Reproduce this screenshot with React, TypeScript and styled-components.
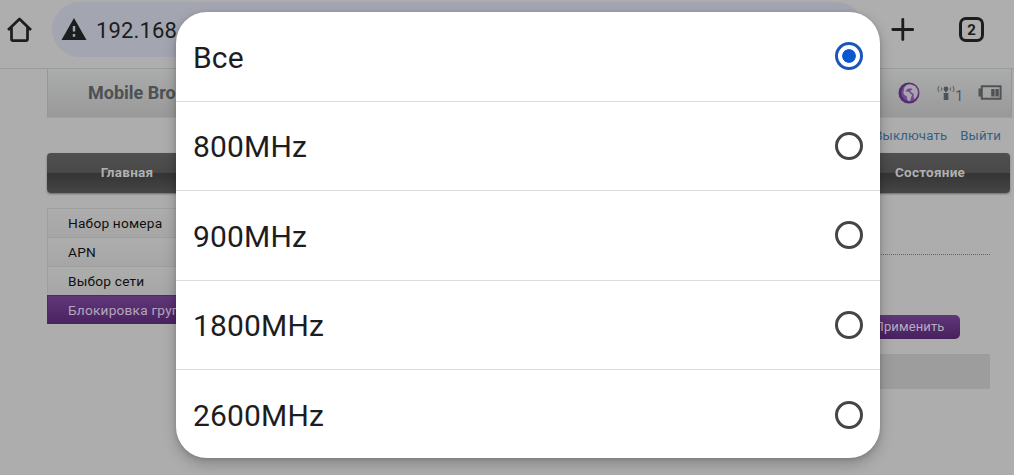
import React, { useState } from "react";
import styled, { createGlobalStyle } from "styled-components";

const GlobalStyle = createGlobalStyle`
  * {
    box-sizing: border-box;
  }
  body {
    margin: 0;
    background-color: #adadad;
    font-family: Roboto, "Liberation Sans", sans-serif;
    overflow: hidden;
  }
`;
const Screen = styled.div`
  position: relative;
  width: 1014px;
  height: 475px;
  overflow: hidden;
`;
const Browser = styled.header`
  height: 69px;
  display: flex;
  align-items: flex-start;
  padding: 2px 30px 0 6px;
  background-color: #aeaeae;
  border-bottom: 1px solid #9b9b9b;
  color: #1c1d1f;
`;
const HomeIcon = styled.svg`
  width: 27px;
  height: 27px;
  margin-top: 14px;
`;
const AddressBar = styled.div`
  width: 812px;
  height: 55px;
  margin-left: 19px;
  padding-left: 9px;
  border-radius: 28px;
  background-color: #a3a6b0;
  display: flex;
  align-items: center;
`;
const WarningIcon = styled.svg`
  width: 26px;
  height: 22px;
  margin-bottom: 2px;
`;
const Url = styled.span`
  margin-left: 9px;
  padding-top: 2px;
  font-size: 22px;
  letter-spacing: 0.15px;
`;
const PlusIcon = styled.svg`
  width: 23px;
  height: 23px;
  margin: 16px 0 0 27px;
`;
const TabCount = styled.div`
  width: 25px;
  height: 25px;
  margin: 15px 0 0 auto;
  border: 3px solid #1c1d1f;
  border-radius: 7px;
  font-size: 15px;
  font-weight: 700;
  line-height: 20px;
  text-align: center;
`;
const Page = styled.main`
  width: 967px;
  margin-left: 47px;
`;
const TitleBar = styled.div`
  height: 49px;
  width: 965px;
  display: flex;
  align-items: center;
  justify-content: space-between;
  padding: 0 9px 1px 40px;
  background: linear-gradient(#abacac, #999999);
  border-left: 1px solid #969696;
  border-right: 1px solid #969696;
  border-bottom: 1px solid #a1a1a1;
`;
const Title = styled.h1`
  margin: 0 0 1px;
  font-size: 18px;
  font-weight: 700;
  color: #4d5153;
`;
const Status = styled.div`
  display: flex;
  align-items: center;
  color: #505355;
  svg {
    display: block;
  }
`;
const Signal = styled.div`
  display: flex;
  align-items: flex-end;
  margin: 0 15px 0 17px;
  font-size: 14px;
  line-height: 13px;
`;
const Bars = styled.span`
  position: relative;
  top: 2px;
`;
const Links = styled.div`
  height: 35px;
  display: flex;
  justify-content: flex-end;
  gap: 13px;
  padding-right: 13px;
  font-size: 13.2px;
  line-height: 35px;
  letter-spacing: 0.15px;
  color: #355f83;
`;
const Nav = styled.nav`
  width: 963px;
  height: 40px;
  display: flex;
  justify-content: space-between;
  border-radius: 4px;
  background: linear-gradient(#505050, #484848 50%, #343434 50%, #464646);
  box-shadow: 0 1px 2px #6b6b6b;
`;
const NavItem = styled.span`
  width: 160px;
  font-size: 13.5px;
  font-weight: 700;
  line-height: 39px;
  letter-spacing: 0.25px;
  text-align: center;
  color: #b0b0b0;
`;
const Content = styled.div`
  display: flex;
  padding-top: 15px;
`;
const Menu = styled.ul`
  width: 190px;
  margin: 0;
  padding: 0;
  list-style: none;
`;
const MenuItem = styled.li<{ $active?: boolean }>`
  height: 29px;
  padding-left: 20px;
  overflow: hidden;
  white-space: nowrap;
  font-size: 13.7px;
  line-height: 28px;
  letter-spacing: 0.2px;
  color: ${(props) => (props.$active ? "#b4a6bd" : "#101010")};
  background: ${(props) =>
    props.$active
      ? "linear-gradient(#603779, #4a2260)"
      : "linear-gradient(#adadad, #a6a6a6)"};
  border: 1px solid ${(props) => (props.$active ? "#52286b" : "#9f9f9f")};
  border-bottom-width: 0;
`;
const Settings = styled.section`
  width: 733px;
  margin-left: 20px;
  display: flex;
  flex-direction: column;
`;
const Divider = styled.div`
  height: 47px;
  border-bottom: 1px dotted #7a4f90;
`;
const Apply = styled.button`
  width: 100px;
  height: 24px;
  margin: 60px 30.5px 15px auto;
  padding: 0 0 1px;
  border: 0;
  border-radius: 5px;
  background: linear-gradient(#603779, #47205d);
  color: #b8acbf;
  font-family: inherit;
  font-size: 13px;
  letter-spacing: 0.1px;
`;
const Band = styled.div`
  height: 35px;
  background-color: #9d9d9d;
`;
const Dialog = styled.div`
  position: absolute;
  top: 12.4px;
  left: 176.4px;
  width: 704px;
  height: 446px;
  border-radius: 31px;
  background-color: #fff;
  box-shadow: 0 6px 14px rgba(0, 0, 0, 0.22), 0 1px 4px rgba(0, 0, 0, 0.14);
  overflow: hidden;
`;
const Option = styled.label`
  height: 89.4px;
  display: flex;
  align-items: center;
  justify-content: space-between;
  padding: 2px 17.3px 0 16.5px;
  border-bottom: 1px solid #dcdcdc;
  font-size: 30px;
  letter-spacing: 0.18px;
  color: #1d1d1f;
  &:last-child {
    border-bottom: 0;
  }
`;
const RadioInput = styled.input`
  appearance: none;
  width: 28px;
  height: 28px;
  margin: 0 0 2.2px;
  border: 3px solid #454547;
  border-radius: 50%;
  &:checked {
    border-color: #1b56b8;
    background: radial-gradient(circle, #0b57d0 6.4px, #fff 7.2px);
  }
`;

const menu = ["Набор номера", "APN", "Выбор сети", "Блокировка группы"];
const bands = ["Все", "800MHz", "900MHz", "1800MHz", "2600MHz"];

const App: React.FC = () => {
  const [band, setBand] = useState("Все");
  return (
    <Screen>
      <GlobalStyle />
      <Browser>
        <HomeIcon viewBox="0 0 27 27" fill="none" stroke="currentColor">
          <path
            d="M2 14 13.5 3 25 14M5.5 11.5V23Q5.5 24.7 7.2 24.7H19.8Q21.5 24.7 21.5 23V11.5"
            strokeWidth="2.7"
            strokeLinejoin="round"
          />
        </HomeIcon>
        <AddressBar>
          <WarningIcon viewBox="0 0 26 22">
            <path d="M13 0 25.5 22H.5Z" fill="currentColor" />
            <path d="M13 8v5.5M13 16v2.8" stroke="#a3a6b0" strokeWidth="2.4" />
          </WarningIcon>
          <Url>192.168</Url>
        </AddressBar>
        <PlusIcon viewBox="0 0 23 23" stroke="currentColor">
          <path d="M11.8 1.5v20M1.8 11.5h20" strokeWidth="2.8" strokeLinecap="round" />
        </PlusIcon>
        <TabCount>2</TabCount>
      </Browser>
      <Page>
        <TitleBar>
          <Title>Mobile Broadband</Title>
          <Status>
            <svg width="22" height="22" viewBox="0 0 22 22">
              <circle cx="11" cy="11" r="10.5" fill="#4f2c6e" />
              <circle cx="12" cy="10.6" r="8.8" fill="#71498f" />
              <path
                d="M6.5 5Q8.5 2.5 12 2.3L17 4l2.5 3.8.3 3.4-1 3-2.3 3-1-2.7.3-2.5-2.2-1.5L12 9l2.5-1.8-1.7-1-3.6.8-1.7 2.3 3.8.7 1.3 2 1.7.8-1.2 2.3-.6 3.2-1.6 1-1.6-1.6-.4-3.2-2.4-1.4-1.2-2.4.6-2.6Z"
                fill="#aaa4af"
              />
            </svg>
            <Signal>
              <svg width="18" height="16" viewBox="0 0 18 16">
                <circle cx="9" cy="4" r="2.4" fill="currentColor" />
                <path d="M9 4v3.2" stroke="currentColor" strokeWidth="1.6" />
                <path d="M6.7 8h4.7v7H6.7z" fill="currentColor" />
                <path
                  d="M4.2 2.5Q5.2 4 4.2 5.7M2.2 1.2Q-.2 4 2.2 6.8M13.8 2.5Q12.8 4 13.8 5.7M15.8 1.2Q18.2 4 15.8 6.8"
                  fill="none"
                  stroke="#666a6c"
                  strokeWidth="1.2"
                />
              </svg>
              <Bars>1</Bars>
            </Signal>
            <svg width="24" height="15" viewBox="0 0 24 15">
              <path
                d="M3.8 1.2h18.8v12.6H3.8z"
                fill="none"
                stroke="currentColor"
                strokeWidth="2"
              />
              <path d="M.5 3.5h3.3v8h-3.3zM13.2 4h3.4v7.5h-3.4zM17.4 4h3.4v7.5h-3.4z" fill="currentColor" />
            </svg>
          </Status>
        </TitleBar>
        <Links>
          <span>Выключать</span>
          <span>Выйти</span>
        </Links>
        <Nav>
          <NavItem>Главная</NavItem>
          <NavItem>Состояние</NavItem>
        </Nav>
        <Content>
          <Menu>
            {menu.map((item, index) => (
              <MenuItem key={item} $active={index === 3}>
                {item}
              </MenuItem>
            ))}
          </Menu>
          <Settings>
            <Divider />
            <Apply>Применить</Apply>
            <Band />
          </Settings>
        </Content>
      </Page>
      <Dialog>
        {bands.map((item) => (
          <Option key={item}>
            {item}
            <RadioInput
              type="radio"
              name="band"
              checked={band === item}
              onChange={() => setBand(item)}
            />
          </Option>
        ))}
      </Dialog>
    </Screen>
  );
};

export default App;
